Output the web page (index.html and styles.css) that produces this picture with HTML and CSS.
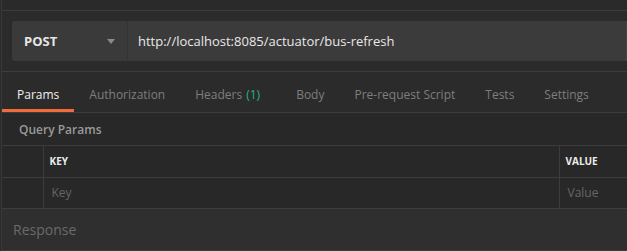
FILE: index.html
```html
<!DOCTYPE html>
<html lang="en">
<head>
    <meta charset="UTF-8">
    <title>Request</title>
    <link rel="stylesheet" href="styles.css">
</head>
<body>
    <div class="pane">
        <div class="topbar"></div>
        <div class="request">
            <div class="method">
                <span>POST</span>
                <svg class="caret" width="8" height="5" viewBox="0 0 8 5"><path d="M0 0h8L4 5z" fill="#8a8a8a"/></svg>
            </div>
            <div class="url">http://localhost:8085/actuator/bus-refresh</div>
        </div>
        <div class="tabs">
            <div class="tab active">Params</div>
            <div class="tab">Authorization</div>
            <div class="tab">Headers <span class="count">(1)</span></div>
            <div class="tab">Body</div>
            <div class="tab">Pre-request Script</div>
            <div class="tab">Tests</div>
            <div class="tab">Settings</div>
        </div>
        <div class="section-title">Query Params</div>
        <table class="params">
            <tr><th class="check"></th><th class="key">KEY</th><th class="value">VALUE</th></tr>
            <tr><td class="check"></td><td class="key placeholder">Key</td><td class="value placeholder">Value</td></tr>
        </table>
        <div class="response">Response</div>
    </div>
</body>
</html>
```

FILE: styles.css
```css
* {
    box-sizing: border-box;
}
body {
    margin: 0;
    background-color: #2b2b2b;
    font-family: 'Open Sans', 'Liberation Sans', sans-serif;
    color: #e6e6e6;
}
.pane {
    margin-left: 1px;
    border-left: 1px solid #383838;
}
.topbar {
    height: 11px;
    background-color: #2a2a2a;
    border-bottom: 1px solid #3c3c3c;
}
.request {
    display: flex;
    padding: 10px 0 10px 10px;
    border-bottom: 1px solid #3c3c3c;
}
.method {
    width: 116px;
    height: 40px;
    display: flex;
    align-items: center;
    justify-content: space-between;
    padding: 0 12px;
    background-color: #3a3a3a;
    border-radius: 3px 0 0 3px;
    border-right: 1px solid #333;
    font-size: 13px;
    font-weight: bold;
}
.caret {
    margin-top: 1px;
}
.url {
    flex: 1;
    height: 40px;
    display: flex;
    align-items: center;
    padding-left: 10px;
    background-color: #3b3b3b;
    border-right: 1px solid #444;
    font-size: 13px;
    color: #e8e8e8;
}
.tabs {
    display: flex;
    height: 41px;
    border-bottom: 1px solid #3c3c3c;
}
.tab {
    padding: 8px 15px 0;
    display: flex;
    align-items: center;
    font-size: 12px;
    color: #7e7e7e;
    border-bottom: 3px solid transparent;
}
.tab.active {
    color: #f0f0f0;
    border-bottom-color: #f26b3a;
}
.count {
    color: #26b47f;
    margin-left: 4px;
    margin-right: 6px;
}
.section-title {
    height: 33px;
    display: flex;
    align-items: center;
    padding-left: 17px;
    font-size: 12px;
    font-weight: 600;
    color: #9a9a9a;
    background-color: #282828;
    border-bottom: 1px solid #3c3c3c;
}
.params {
    width: 100%;
    border-collapse: collapse;
    background-color: #282828;
}
.params th, .params td {
    height: 31px;
    padding: 0 6px;
    text-align: left;
    border-bottom: 1px solid #3c3c3c;
}
.params th {
    font-size: 10px;
    font-weight: bold;
    color: #ececec;
}
.params .check {
    width: 41px;
    border-right: 1px solid #3c3c3c;
}
.params .value {
    width: 68px;
    border-left: 1px solid #3c3c3c;
}
.placeholder {
    font-size: 12px;
    color: #666;
}
.params td.key, .params td.value {
    padding-left: 8px;
}
.response {
    height: 42px;
    display: flex;
    align-items: center;
    padding-left: 11px;
    font-size: 14px;
    color: #6a6a6a;
    background-color: #2f2f2f;
    border-bottom: 1px solid #3c3c3c;
}
```
